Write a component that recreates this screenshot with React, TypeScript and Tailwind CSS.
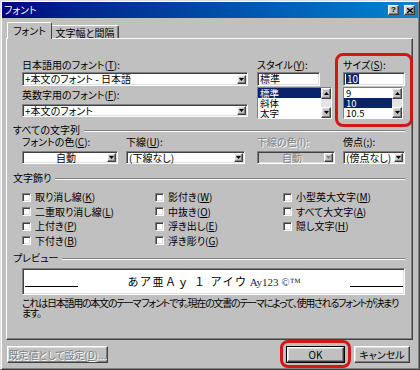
import React from "react";

const FONT = "font-['MS_UI_Gothic','Noto_Sans_CJK_JP',sans-serif] [font-feature-settings:'palt']";
const sunken =
  "border border-t-[#808080] border-l-[#808080] border-b-white border-r-white shadow-[inset_1px_1px_0_#404040,inset_-1px_-1px_0_#dfdfdf]";
const thin = "border border-t-[#808080] border-l-[#808080] border-b-white border-r-white";
const raised =
  "bg-[#c0c0c0] border border-t-white border-l-white border-b-[#404040] border-r-[#404040] shadow-[inset_-1px_-1px_0_#808080,inset_1px_1px_0_#dfdfdf]";
const dis = "text-[#808080] [text-shadow:1px_1px_0_#ffffff]";

function Tri({ up, gray }: { up?: boolean; gray?: boolean }) {
  return (
    <svg width="5" height="3" viewBox="0 0 5 3">
      <path d={up ? "M2.5 0 L5 3 L0 3Z" : "M0 0 L5 0 L2.5 3Z"} fill={gray ? "#808080" : "#000"} />
    </svg>
  );
}

function ArrowBtn({ gray }: { gray?: boolean }) {
  return (
    <div className={`${raised} w-[9px] h-[9px] shrink-0 flex items-center justify-center`}>
      <Tri gray={gray} />
    </div>
  );
}

function Combo({
  children,
  className = "",
  disabled,
  center,
}: {
  children: React.ReactNode;
  className?: string;
  disabled?: boolean;
  center?: boolean;
}) {
  return (
    <div
      className={`${sunken} ${disabled ? "bg-[#c0c0c0]" : "bg-white"} h-[13px] p-[1px] flex items-center ${className}`}
    >
      <div
        className={`flex-1 whitespace-nowrap leading-[10px] pl-[1px] ${center ? "text-center" : ""} ${
          disabled ? dis : ""
        }`}
      >
        {children}
      </div>
      <ArrowBtn gray={disabled} />
    </div>
  );
}

function Label({ children, className = "" }: { children: React.ReactNode; className?: string }) {
  return <div className={`h-[12px] leading-[12px] whitespace-nowrap ${className}`}>{children}</div>;
}

function ScrollBtn({ up }: { up?: boolean }) {
  return (
    <div className={`${raised} w-[10px] h-[11px] flex items-center justify-center`}>
      <Tri up={up} />
    </div>
  );
}

function ListBox({ items, sel }: { items: string[]; sel: number }) {
  return (
    <div className={`${thin} bg-white h-[32px] flex`}>
      <div className="flex-1 flex flex-col">
        {items.map((t, i) => (
          <div
            key={t}
            className={`h-[10px] leading-[10px] text-[9.5px] pl-[2px] whitespace-nowrap ${
              i === sel ? "bg-[#0a246a] text-white" : ""
            }`}
          >
            {t}
          </div>
        ))}
      </div>
      <div className="w-[10px] flex flex-col justify-between bg-[#e4e4e4]">
        <ScrollBtn up />
        <ScrollBtn />
      </div>
    </div>
  );
}

function Group({ children, className = "" }: { children: React.ReactNode; className?: string }) {
  return (
    <div className={`flex items-center h-[12px] ${className}`}>
      <span className="leading-[12px] whitespace-nowrap">{children}</span>
      <div className="ml-[4px] mt-[2px] flex-1 h-[2px] border-t border-t-[#808080] border-b border-b-white" />
    </div>
  );
}

function Check({ children }: { children: React.ReactNode }) {
  return (
    <div className="flex items-center h-[14.5px]">
      <div className={`${sunken} w-[9px] h-[9px] bg-white shrink-0`} />
      <span className="ml-[4px] leading-[12px] whitespace-nowrap">{children}</span>
    </div>
  );
}

export default function App() {
  return (
    <div
      className={`${FONT} text-[10px] text-black relative w-[420px] h-[370px] bg-[#c0c0c0] p-[1px] border border-t-[#dfdfdf] border-l-[#dfdfdf] border-b-[#404040] border-r-[#404040] shadow-[inset_1px_1px_0_#ffffff,inset_-1px_-1px_0_#808080]`}
    >
      {/* title bar */}
      <div className="h-[16px] flex items-center bg-gradient-to-r from-[#000080] to-[#1084d0] pl-[2px] pr-[3px]">
        <span className="text-white leading-[12px] flex-1">フォント</span>
        <div className={`${raised} w-[11px] h-[10px] flex items-center justify-center`}>
          <span className="font-bold text-[8px] leading-[8px] font-['Liberation_Sans',sans-serif]">?</span>
        </div>
        <div className={`${raised} ml-[5px] w-[11px] h-[10px] flex items-center justify-center`}>
          <svg width="6" height="5" viewBox="0 0 6 5">
            <path d="M0 0 L6 5 M6 0 L0 5" stroke="#000" strokeWidth="1.4" />
          </svg>
        </div>
      </div>

      <div className="pl-[4px] pr-[5px] mt-[4px]">
        {/* tabs */}
        <div className="flex items-end h-[16px] pl-[1px]">
          <div className="relative z-10 h-[17px] -mb-[1px] w-[45px] bg-[#c0c0c0] border-t border-l border-white border-r border-r-[#404040] rounded-t-[2px] flex items-center justify-center pb-[2px]">
            フォント
          </div>
          <div className="h-[13px] w-[67px] bg-[#c0c0c0] border-t border-white border-r border-r-[#404040] shadow-[inset_-1px_0_0_#808080] rounded-tr-[2px] flex items-center justify-center">
            文字幅と間隔
          </div>
        </div>

        {/* panel */}
        <div className="h-[302px] border border-t-white border-l-white border-b-[#404040] border-r-[#404040] shadow-[inset_-1px_-1px_0_#808080] pl-[6px] pr-[7px] pt-[20px] flex flex-col">
          <div className="pl-[9px] flex">
            <div className="w-[226px] flex flex-col">
              <Label>
                日本語用のフォント(<u>T</u>):
              </Label>
              <Combo className="mt-[1px] h-[14px]">+本文のフォント - 日本語</Combo>
              <Label className="mt-[3px]">
                英数字用のフォント(<u>F</u>):
              </Label>
              <Combo className="mt-[3px]">+本文のフォント</Combo>
            </div>
            <div className="ml-[9px] w-[75px] flex flex-col">
              <Label>
                スタイル(<u>Y</u>):
              </Label>
              <div className={`${sunken} mt-[1px] h-[14px] w-[63px] bg-white leading-[12px] pl-[2px]`}>標準</div>
              <div className="mt-[1px]">
                <ListBox items={["標準", "斜体", "太字"]} sel={0} />
              </div>
            </div>
            <div className="ml-[11px] w-[62px] flex flex-col">
              <Label>
                サイズ(<u>S</u>):
              </Label>
              <div className={`${sunken} mt-[1px] h-[14px] bg-white flex items-center pl-[2px]`}>
                <span className="bg-[#0a246a] text-white leading-[10px] px-[1px]">10</span>
              </div>
              <div className="mt-[1px] w-[60px]">
                <ListBox items={["9", "10", "10.5"]} sel={1} />
              </div>
            </div>
          </div>

          <Group className="mt-[5px]">すべての文字列</Group>
          <div className="pl-[9px] flex">
            <div className="w-[96px] flex flex-col">
              <Label>
                フォントの色(<u>C</u>):
              </Label>
              <Combo className="mt-[3px]" center>
                自動
              </Combo>
            </div>
            <div className="ml-[8px] w-[119px] flex flex-col">
              <Label>
                下線(<u>U</u>):
              </Label>
              <Combo className="mt-[3px]">(下線なし)</Combo>
            </div>
            <div className="ml-[12px] w-[78px] flex flex-col">
              <Label className={dis}>下線の色(I):</Label>
              <Combo className="mt-[3px]" center disabled>
                自動
              </Combo>
            </div>
            <div className="ml-[8px] w-[62px] flex flex-col">
              <Label>
                傍点(<u>;</u>):
              </Label>
              <Combo className="mt-[3px]">(傍点なし)</Combo>
            </div>
          </div>

          <Group className="mt-[8px]">文字飾り</Group>
          <div className="pl-[9px] mt-[6px] flex">
            <div className="w-[133px] flex flex-col">
              <Check>
                取り消し線(<u>K</u>)
              </Check>
              <Check>
                二重取り消し線(<u>L</u>)
              </Check>
              <Check>
                上付き(<u>P</u>)
              </Check>
              <Check>
                下付き(<u>B</u>)
              </Check>
            </div>
            <div className="w-[128px] flex flex-col">
              <Check>
                影付き(<u>W</u>)
              </Check>
              <Check>
                中抜き(<u>O</u>)
              </Check>
              <Check>
                浮き出し(<u>E</u>)
              </Check>
              <Check>
                浮き彫り(<u>G</u>)
              </Check>
            </div>
            <div className="flex flex-col">
              <Check>
                小型英大文字(<u>M</u>)
              </Check>
              <Check>
                すべて大文字(<u>A</u>)
              </Check>
              <Check>
                隠し文字(<u>H</u>)
              </Check>
            </div>
          </div>

          <Group className="mt-[4px]">プレビュー</Group>
          <div className="pl-[9px] mt-[4px]">
            <div className={`${sunken} bg-white h-[27px] flex items-end pl-[2px] pr-[1px] pb-[7px]`}>
              <div className="w-[53px] h-px bg-black" />
              <div className="flex-1 text-center whitespace-nowrap leading-[14px] mb-[-2px]">
                <span className="text-[11px] tracking-[1.5px] [font-feature-settings:normal]">あア亜Ａｙ １ アイウ</span>{" "}
                <span className="font-['Liberation_Serif',serif] text-[11px] text-[#1c1c48]">Ay123 ©™</span>
              </div>
              <div className="w-[53px] h-px bg-black" />
            </div>
            <div className="mt-[3px] leading-[10px] tracking-[-1.25px] whitespace-nowrap">
              <div>これは日本語用の本文のテーマ フォントです。現在の文書のテーマによって、使用されるフォントが決まり</div>
              <div>ます。</div>
            </div>
          </div>
        </div>

        {/* buttons */}
        <div className="mt-[6px] flex pl-[1px] pr-[3px]">
          <div className={`${raised} w-[101px] h-[17px] flex items-center justify-center ${dis}`}>
            既定値として設定(<u>D</u>)...
          </div>
          <div className="flex-1" />
          <div className="w-[59px] h-[17px] border border-black">
            <div className={`${raised} w-full h-full flex items-center justify-center`}>OK</div>
          </div>
          <div className={`${raised} ml-[9px] w-[56px] h-[17px] flex items-center justify-center`}>キャンセル</div>
        </div>
      </div>

      {/* red highlight rectangles */}
      <div className="absolute left-[334px] top-[52px] w-[78px] h-[74px] border-[3px] border-[#d01818] rounded-[8px]" />
      <div className="absolute left-[279px] top-[339px] w-[71px] h-[28px] border-[3px] border-[#d01818] rounded-[8px]" />
    </div>
  );
}
